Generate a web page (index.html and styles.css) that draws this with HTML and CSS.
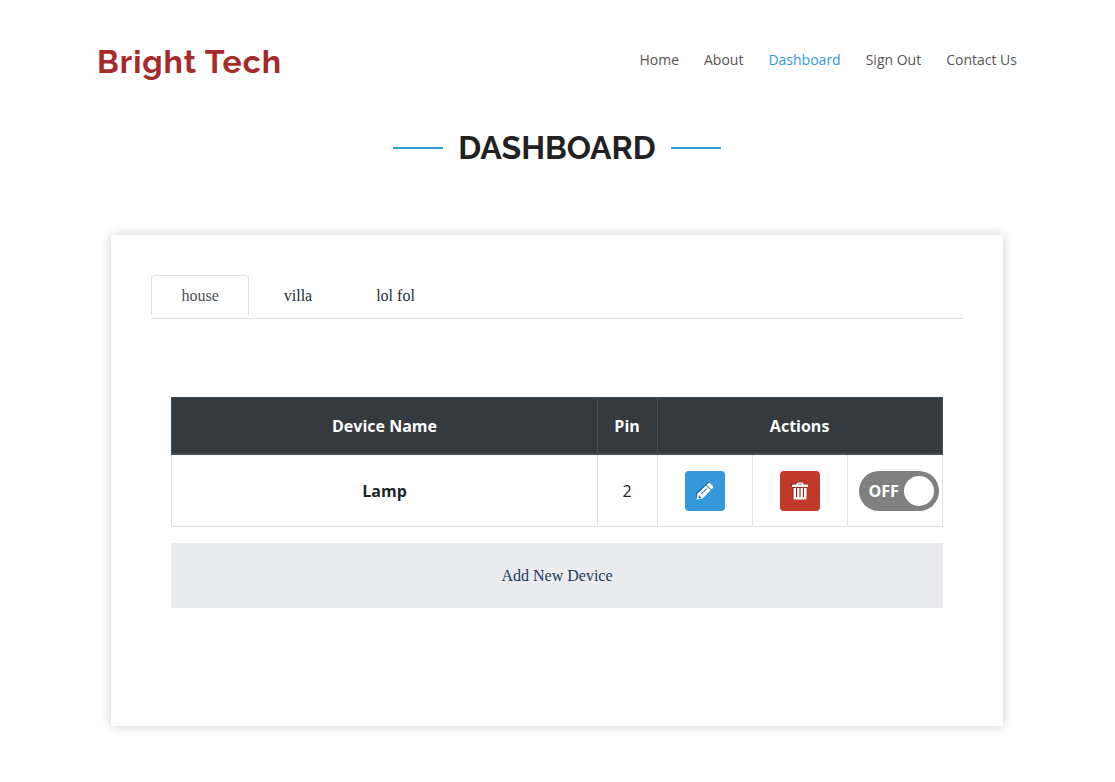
FILE: index.html
```html
<!DOCTYPE html>
<html lang="en">
<head>
<meta charset="utf-8">
<meta name="viewport" content="width=device-width, initial-scale=1">
<title>Bright Tech - Dashboard</title>
<link rel="stylesheet" href="styles.css">
</head>
<body>
<header class="site-header">
  <a class="brand" href="#">Bright Tech</a>
  <nav class="site-nav">
    <a href="#">Home</a>
    <a href="#">About</a>
    <a class="current" href="#">Dashboard</a>
    <a href="#">Sign Out</a>
    <a href="#">Contact Us</a>
  </nav>
</header>
<main>
  <h1 class="page-title">Dashboard</h1>
  <section class="panel">
    <div class="tabs" role="tablist">
      <button class="tab active" role="tab" aria-selected="true">house</button>
      <button class="tab" role="tab" aria-selected="false">villa</button>
      <button class="tab" role="tab" aria-selected="false">lol fol</button>
    </div>
    <div class="devices">
      <table class="device-table">
        <colgroup><col><col class="col-pin"><col class="col-action"><col class="col-action"><col class="col-action"></colgroup>
        <thead>
          <tr><th>Device Name</th><th>Pin</th><th colspan="3">Actions</th></tr>
        </thead>
        <tbody>
          <tr>
            <th scope="row">Lamp</th>
            <td>2</td>
            <td>
              <button class="action edit" aria-label="Edit">
                <svg class="icon" viewBox="0 0 18 18" aria-hidden="true">
                  <path fill="#fff" fill-rule="evenodd" d="M12.2 1.3q1-.9 2 0l2.7 2.7q.9 1 0 2l-1.5 1.5-4.7-4.7zM10 3.5l4.7 4.7-8.2 8.2-5.4 1q-.6 0-.5-.6l1-5.3zM2.8 13l-.5 2.6 1 .8 1.8-.4-.4-1.3zM10.6 6.3l-5.8 5.2.6.7 5.8-5.2z"/>
                </svg>
              </button>
            </td>
            <td>
              <button class="action delete" aria-label="Delete">
                <svg class="icon" viewBox="0 0 18 18" aria-hidden="true">
                  <path fill="#fff" fill-rule="evenodd" d="M5.5 2.5V2Q5.5.5 7 .5h4q1.500 0 1.500 1.500v.5H16q1 0 1 1V5H1V3.500q0-1 1-1zM7 2.500h4V1.700H7zM2.500 6h13v10.500q0 1-1 1h-11q-1 0-1-1zM5 6v9h1.200V6zM8.400 6v9h1.200V6zM11.800 6v9H13V6z"/>
                </svg>
              </button>
            </td>
            <td class="switch-cell">
              <label class="switch">
                <input type="checkbox" aria-label="Lamp power">
                <span class="state">OFF</span>
                <span class="knob"></span>
              </label>
            </td>
          </tr>
        </tbody>
      </table>
      <button class="add-device">Add New Device</button>
    </div>
  </section>
</main>
</body>
</html>
```
FILE: styles.css
```css
* { box-sizing: border-box; }
body {
  margin: 0;
  padding-right: 1px;
  background: #fff;
  color: #212529;
  font: 16px/24px "Open Sans", sans-serif;
}
a { text-decoration: none; }
button { font: inherit; cursor: pointer; }

.site-header {
  display: flex;
  align-items: center;
  justify-content: space-between;
  max-width: 960px;
  margin: 0 auto;
  padding: 40px 20px 0;
}
.brand {
  color: #a52a2a;
  font: bold 32px/44px Raleway, Lato, sans-serif;
  letter-spacing: 1px;
}
.site-nav {
  display: flex;
  gap: 25px;
  padding-bottom: 4px;
  font-size: 14px;
}
.site-nav a { color: #555; }
.site-nav .current { color: #3498db; }

.page-title {
  display: flex;
  align-items: center;
  justify-content: center;
  gap: 15px;
  margin: 44px 0 0;
  color: #222;
  font: bold 32px/40px Raleway, Lato, sans-serif;
  text-transform: uppercase;
}
.page-title::before,
.page-title::after {
  content: "";
  width: 50px;
  height: 2px;
  background: #3498db;
}

.panel {
  width: 80%;
  margin: 67px auto 56px;
  padding: 40px 40px 118px;
  box-shadow: 0 0 10px rgba(0, 0, 0, 0.2);
}
.tabs {
  display: flex;
  padding-bottom: 3px;
  border-bottom: 1px solid #dee2e6;
}
.tab {
  height: 40px;
  padding: 0 31px;
  border: 1px solid transparent;
  border-bottom: 0;
  border-radius: 4px 4px 0 0;
  background: none;
  color: #212f3d;
  font-family: "Liberation Serif", serif;
}
.tab.active {
  margin-right: 3px;
  padding: 0 29px;
  border-color: #dddfe6;
  color: #495057;
}

.devices { padding: 78px 20px 0; }
.device-table {
  width: 100%;
  margin-bottom: 16px;
  border-collapse: collapse;
  table-layout: fixed;
  text-align: center;
}
.col-pin { width: 60px; }
.col-action { width: 95px; }
.device-table th,
.device-table td {
  padding: 16px 0 15px;
  border: 1px solid #dee2e6;
}
.device-table thead th {
  border-color: #454d55;
  border-bottom-width: 2px;
  background: #343a40;
  color: #fff;
}
.action {
  display: block;
  width: 40px;
  height: 40px;
  margin: 0 auto;
  padding: 0;
  border: 0;
  border-radius: 4px;
}
.edit { background: #3498db; }
.delete { background: #c0392b; }
.icon {
  display: block;
  width: 18px;
  height: 18px;
  margin: 0 auto;
  filter: drop-shadow(-1px -1px 0 rgba(0, 0, 0, 0.3));
}
.device-table .switch-cell { padding-left: 11px; }
.switch {
  display: flex;
  align-items: center;
  justify-content: space-between;
  width: 80px;
  height: 40px;
  padding: 0 5px 0 10px;
  border-radius: 20px;
  background: #808080;
  color: #fff;
  font-weight: bold;
  cursor: pointer;
}
.switch input {
  position: absolute;
  opacity: 0;
}
.knob {
  width: 30px;
  height: 30px;
  border-radius: 50%;
  background: #fff;
}
.add-device {
  display: block;
  width: 100%;
  padding: 20px;
  border: 0;
  background: #eaebef;
  color: #1b3a57;
  font-family: "Liberation Serif", serif;
  line-height: 25px;
}
```
